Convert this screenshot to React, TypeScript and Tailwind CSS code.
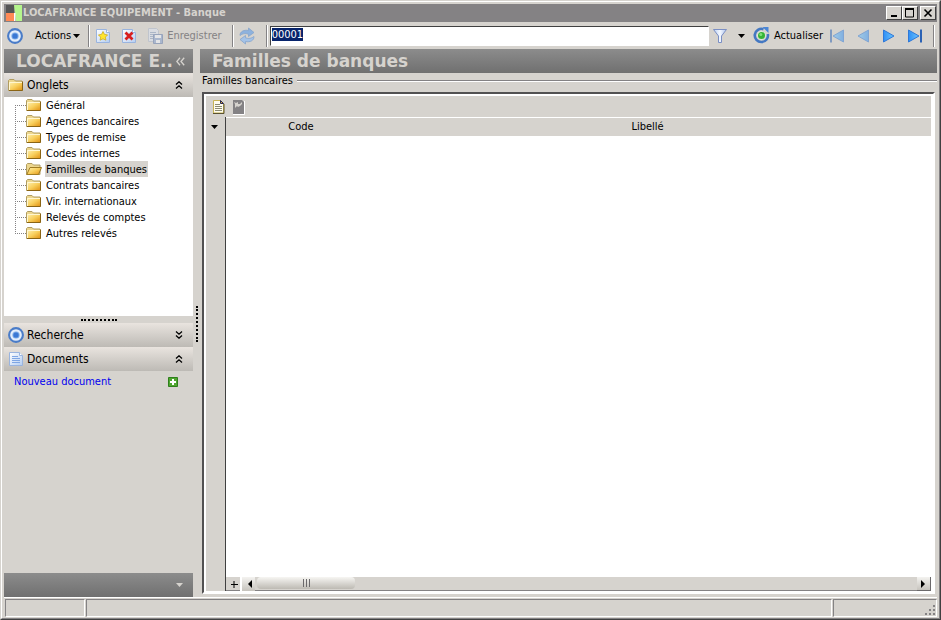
import { useEffect, useRef, type ReactNode } from "react";

const tabs = [
  "Général",
  "Agences bancaires",
  "Types de remise",
  "Codes internes",
  "Familles de banques",
  "Contrats bancaires",
  "Vir. internationaux",
  "Relevés de comptes",
  "Autres relevés",
];
const activeTab = "Familles de banques";

function Gradients() {
  return (
    <svg width="0" height="0" className="absolute" aria-hidden="true">
      <defs>
        <linearGradient id="folder" x1="0" y1="0" x2="1" y2="1">
          <stop offset="0" stopColor="#fff0b0" />
          <stop offset="0.5" stopColor="#f8cf5c" />
          <stop offset="1" stopColor="#e08f10" />
        </linearGradient>
        <linearGradient id="paper" x1="0" y1="0" x2="1" y2="1">
          <stop offset="0" stopColor="#ffffff" />
          <stop offset="1" stopColor="#b4cdf2" />
        </linearGradient>
        <linearGradient id="nav" x1="0" y1="0" x2="1" y2="0">
          <stop offset="0" stopColor="#2f8ef4" />
          <stop offset="1" stopColor="#6cc6ff" />
        </linearGradient>
        <linearGradient id="funnel" x1="0" y1="0" x2="1" y2="0">
          <stop offset="0" stopColor="#b9cff2" />
          <stop offset="0.5" stopColor="#f4f8ff" />
          <stop offset="1" stopColor="#a9c0ea" />
        </linearGradient>
      </defs>
    </svg>
  );
}

function Target() {
  return (
    <svg width="16" height="16" viewBox="0 0 16 16" className="shrink-0">
      <circle cx="8" cy="8" r="6.9" fill="#e4eefb" stroke="#4a7cc8" strokeWidth="2.1" />
      <circle cx="8" cy="8" r="3.600" fill="#79a9e6" />
      <circle cx="8" cy="8" r="2.600" fill="#3a78d4" />
    </svg>
  );
}

function Folder({ open = false }: { open?: boolean }) {
  return (
    <svg width="16" height="16" viewBox="0 0 16 16" className="shrink-0">
      <path d="M.5 13.5V3.500l1-1H6L7.500 4H14v9.500z" fill="#ecd68e" stroke="#b09c60" />
      {open ? (
        <path d="M.8 13.5 4 6.5h11.5l-3 7z" fill="url(#folder)" stroke="#a07c24" />
      ) : (
        <>
          <path d="M1 5h13.500v8.500H1z" fill="url(#folder)" />
          <path d="M1 13.500h13.500V4.500" fill="none" stroke="#8a6414" />
          <path d="M1.500 13V5.500H14" fill="none" stroke="#fff6cf" />
        </>
      )}
    </svg>
  );
}

function Page({ children }: { children?: ReactNode }) {
  return (
    <svg width="16" height="16" viewBox="0 0 16 16" className="shrink-0">
      <path d="M1.500 1.500h10l3 3v10h-13z" fill="url(#paper)" stroke="#9ab4de" />
      <path d="M11.500 1.500v3h3" fill="#fff" stroke="#9ab4de" />
      {children}
    </svg>
  );
}

function PageLines() {
  return (
    <Page>
      <path d="M4 5.500h6M4 7.500h8M4 9.500h8M4 11.500h8" stroke="#7fa6e4" />
    </Page>
  );
}

function Save() {
  return (
    <svg width="16" height="16" viewBox="0 0 16 16" className="shrink-0 opacity-60">
      <path d="M1.500.5h8l2 2v11h-10z" fill="#dbe3f0" stroke="#b0bbcd" />
      <path d="M3 4.500h6M3 6.500h6M3 8.500h4M3 10.500h3" stroke="#8fa3c4" />
      <path d="M6.500 6.500h9v9h-9z" fill="#8ea6cf" stroke="#7086b0" />
      <path d="M8 7h6v3H8zM9 12h4v3H9z" fill="#eef2f8" />
    </svg>
  );
}

function Sync() {
  return (
    <svg width="18" height="18" viewBox="0 0 18 18" className="shrink-0">
      <path d="M2 8.500C1.800 4.500 6 2.500 10.500 3.500V1L16 5.500l-5.500 4V7.200C7.500 6 4.500 6.500 2 8.500z" fill="#8db2de" stroke="#86a5cc" strokeWidth=".8" />
      <path d="M16 9.500c.2 4-4 6-8.500 5V17L2 12.500l5.500-4v2.300c3 1.200 6 .7 8.500-1.300z" fill="#a4c3e8" stroke="#86a5cc" strokeWidth=".8" />
    </svg>
  );
}

function Funnel() {
  return (
    <svg width="16" height="16" viewBox="0 0 16 16">
      <path d="M1.500 1.500h13L9.500 8v6.500h-3V8z" fill="url(#funnel)" stroke="#7b8fc4" />
    </svg>
  );
}

function Refresh() {
  return (
    <svg width="17" height="17" viewBox="0 0 17 17" className="shrink-0">
      <path d="M10.500 2.200A6.600 6.600 0 1 0 14.800 7" fill="none" stroke="#4478c2" strokeWidth="2.600" />
      <path d="M9.500 0h6v6z" fill="#4a86d6" />
      <circle cx="8.500" cy="8.500" r="4.200" fill="#dff0df" />
      <circle cx="8.500" cy="8.500" r="3.500" fill="#36b336" />
      <circle cx="7.800" cy="7.600" r="1.500" fill="#7fe07a" />
    </svg>
  );
}

function Nav({ flip = false, bar = false }: { flip?: boolean; bar?: boolean }) {
  return (
    <svg
      width="16"
      height="16"
      viewBox="0 0 16 16"
      className={flip ? "rotate-180 opacity-50" : ""}
    >
      <path d={bar ? "M1.500 2v12l10.500-6z" : "M2.500 2v12l10.500-6z"} fill="url(#nav)" stroke="#2f78d8" />
      {bar && <path d="M13 1.500h2v13h-2z" fill="#2c62b4" />}
    </svg>
  );
}

function Caret() {
  return (
    <svg width="7" height="4" viewBox="0 0 7 4" fill="currentColor" className="shrink-0">
      <path d="M0 0h7L3.500 4z" />
    </svg>
  );
}

function Chevrons({ down = false }: { down?: boolean }) {
  return (
    <svg width="8" height="8" viewBox="0 0 8 8" className={down ? "rotate-180" : ""}>
      <path d="M1 3.500 4 .8l3 2.700M1 7.500l3-2.700 3 2.700" fill="none" stroke="#000" strokeWidth="1.300" />
    </svg>
  );
}

function Separator() {
  return <span className="h-[22px] w-[2px] shrink-0 border-l border-r border-l-[#848284] border-r-white" />;
}

function WindowButton({ label, children }: { label: string; children: ReactNode }) {
  return (
    <button
      aria-label={label}
      className="flex h-[14px] w-4 items-center justify-center border border-t-white border-r-[#404040] border-b-[#404040] border-l-white bg-[#d6d3ce]"
    >
      <svg width="10" height="10" viewBox="0 0 10 10" fill="none" stroke="#000">
        {children}
      </svg>
    </button>
  );
}

function TitleBar() {
  return (
    <header className="flex h-[18px] shrink-0 items-center bg-[#848284] pr-px text-[11px] font-bold text-[#d6d3ce]">
      <svg width="18" height="18" viewBox="0 0 18 18" className="mr-px shrink-0">
        <path d="M2 1h8v8H2z" fill="#555" />
        <path d="M2 9h8v8H2z" fill="#ff8a55" />
        <path d="M10 1h8v16h-6z" fill="#b5f58c" />
        <path d="M10 9h1.500v8H10z" fill="#fff" />
      </svg>
      <h1 className="grow whitespace-pre">LOCAFRANCE EQUIPEMENT - Banque</h1>
      <div className="flex">
        <WindowButton label="Réduire">
          <path d="M2 8h6" strokeWidth="2" />
        </WindowButton>
        <WindowButton label="Agrandir">
          <path d="M.5 1h8v8h-8z" />
          <path d="M0 1h9" strokeWidth="2" />
        </WindowButton>
        <span className="w-[2px]" />
        <WindowButton label="Fermer">
          <path d="m1.500 1.500 7 7m0-7-7 7" strokeWidth="1.600" />
        </WindowButton>
      </div>
    </header>
  );
}

function Toolbar() {
  const record = useRef<HTMLInputElement>(null);
  useEffect(() => {
    record.current?.focus();
    record.current?.select();
  }, []);
  return (
    <div className="flex h-[27px] shrink-0 items-center pr-[2px] pl-[3px]">
      <Target />
      <button className="ml-3 flex items-center gap-[2px]">
        Actions <Caret />
      </button>
      <span className="w-2" />
      <Separator />
      <button aria-label="Nouveau" className="ml-[5px]">
        <Page>
          <path d="m8 3.500 1.500 2.900 3.100.5-2.200 2.200.5 3.100L8 10.800l-2.900 1.400.5-3.100-2.200-2.200 3.100-.5z" fill="#ffe52e" stroke="#c9a512" strokeWidth=".7" />
        </Page>
      </button>
      <button aria-label="Supprimer" className="ml-[10px]">
        <Page>
          <path d="m4.500 4.500 7 7m0-7-7 7" stroke="#d81e1e" strokeWidth="2.800" />
        </Page>
      </button>
      <button disabled className="ml-[10px] flex items-center gap-1 text-[#848284]">
        <Save /> Enregistrer
      </button>
      <span className="w-[10px]" />
      <Separator />
      <button aria-label="Synchroniser" className="ml-1">
        <Sync />
      </button>
      <span className="w-[10px]" />
      <Separator />
      <input
        ref={record}
        aria-label="Code banque"
        defaultValue="00001"
        className="ml-[2px] h-5 min-w-0 grow border border-t-[#404040] border-r-white border-b-white border-l-[#404040] bg-white px-px pb-[2px] outline-none selection:bg-[#08246b] selection:text-white"
      />
      <button aria-label="Filtrer" className="ml-[3px]">
        <Funnel />
      </button>
      <button aria-label="Options du filtre" className="mr-2 ml-[10px]">
        <Caret />
      </button>
      <button className="flex items-center gap-1">
        <Refresh /> Actualiser
      </button>
      <div className="mr-[10px] ml-[6px] flex gap-[10px]">
        <button aria-label="Premier"><Nav flip bar /></button>
        <button aria-label="Précédent"><Nav flip /></button>
        <button aria-label="Suivant"><Nav /></button>
        <button aria-label="Dernier"><Nav bar /></button>
      </div>
      <Separator />
    </div>
  );
}

function SectionHeader({ icon, title, collapsed = false }: { icon: ReactNode; title: string; collapsed?: boolean }) {
  return (
    <button className="flex h-6 w-full shrink-0 items-center gap-[3px] bg-linear-to-b from-[#e9e4df] to-[#bdbab5] pr-[10px] pl-1 text-[12px]">
      {icon}
      <span className="grow text-left">{title}</span>
      <Chevrons down={collapsed} />
    </button>
  );
}

function Tree() {
  return (
    <nav className="h-[219px] shrink-0 bg-white">
      <ul>
        {tabs.map((tab, i) => (
          <li key={tab}>
            <a href="#" className="flex h-4 items-center pl-[11px]">
              <svg width="11" height="16" viewBox="0 0 11 16" fill="none" stroke="#848284" strokeDasharray="1 1">
                <path d={i === 0 ? "M.5 8v8" : i === tabs.length - 1 ? "M.5 0v8" : "M.5 0v16"} />
                <path d="M0 8.500h11" />
              </svg>
              <Folder open={tab === activeTab} />
              <span className={tab === activeTab ? "ml-[3px] bg-[#d6d3ce] px-px pt-[2px]" : "ml-[3px] px-px pt-[2px]"}>
                {tab}
              </span>
            </a>
          </li>
        ))}
      </ul>
    </nav>
  );
}

function Sidebar() {
  return (
    <aside className="flex w-[189px] shrink-0 flex-col">
      <div className="flex h-6 shrink-0 items-center bg-linear-to-b from-[#8c8c8c] to-[#707070] pr-2 pl-3 font-[Verdana,'DejaVu_Sans',sans-serif] text-[17px] font-bold text-[#d6d3ce]">
        <h2 className="grow whitespace-nowrap">LOCAFRANCE E..</h2>
        <button aria-label="Replier le volet">
          <svg width="9" height="9" viewBox="0 0 9 9" fill="none" stroke="currentColor" strokeWidth="1.300">
            <path d="M4 .8.800 4.500 4 8.200M8.200.8 5 4.500l3.200 3.700" />
          </svg>
        </button>
      </div>
      <SectionHeader icon={<Folder />} title="Onglets" />
      <Tree />
      <div className="flex h-[7px] shrink-0 items-center justify-center">
        <span className="w-9 border-t-2 border-dotted border-black" />
      </div>
      <SectionHeader icon={<Target />} title="Recherche" collapsed />
      <SectionHeader icon={<PageLines />} title="Documents" />
      <div className="flex h-[22px] shrink-0 items-center justify-between pr-[15px] pl-[10px]">
        <a href="#" className="text-[#0000ef]">Nouveau document</a>
        <button aria-label="Ajouter un document">
          <svg width="10" height="10" viewBox="0 0 10 10">
            <path d="M.5.5h9v9h-9z" fill="#4fa62f" stroke="#2f7f1c" />
            <path d="M5 2v6M2 5h6" stroke="#fff" strokeWidth="2" />
          </svg>
        </button>
      </div>
      <div className="grow" />
      <div className="flex h-6 shrink-0 items-center justify-end bg-linear-to-b from-[#8c8c8c] to-[#707070] pr-[10px] text-[#d6d3ce]">
        <button aria-label="Plus de volets"><Caret /></button>
      </div>
    </aside>
  );
}

function ScrollBar() {
  return (
    <div className="flex h-[14px] shrink-0 bg-[#d6d3ce] shadow-[inset_0_-1px_#848284]">
      <button aria-label="Ajouter une ligne" className="w-4 border-r-2 border-white">
        <svg width="14" height="14" viewBox="0 0 14 14"><path d="M8 4v7M5 7.500h7" stroke="#000" /></svg>
      </button>
      <button aria-label="Défiler à gauche" className="w-[13px] bg-linear-to-b from-[#f4f3f0] to-[#c6c3bd]">
        <svg width="13" height="14" viewBox="0 0 13 14"><path d="M10 3v8L6 7z" /></svg>
      </button>
      <div className="ml-[2px] flex h-3 w-[98px] items-center justify-center gap-[2px] rounded-sm bg-linear-to-b from-[#f7f6f3] to-[#bdbab3]">
        <span className="h-2 w-px bg-[#6b696b]" />
        <span className="h-2 w-px bg-[#6b696b]" />
        <span className="h-2 w-px bg-[#6b696b]" />
      </div>
      <div className="grow" />
      <button aria-label="Défiler à droite" className="w-[14px] border-r border-b border-[#6b696b] bg-linear-to-b from-[#f4f3f0] to-[#c6c3bd]">
        <svg width="13" height="13" viewBox="0 0 13 13"><path d="M4 3v8l4-4z" /></svg>
      </button>
    </div>
  );
}

function Grid() {
  return (
    <div className="mx-[2px] mt-1 mb-[3px] flex grow flex-col border-2 border-t-[#525152] border-r-white border-b-white border-l-[#525152] bg-[#d6d3ce]">
      <div className="flex grow flex-col border-t-2 border-r-2 border-b border-l-2 border-white">
        <div className="flex h-[21px] shrink-0 items-center gap-[5px] pl-[6px]">
          <button aria-label="Nouvelle ligne">
            <svg width="14" height="16" viewBox="0 0 14 16">
              <path d="M1.500 1.500h7l3 3v9.500h-10z" fill="#fffdf0" stroke="#c9b455" />
              <path d="M12 5v9.500H1" fill="none" stroke="#5a5230" />
              <path d="M8.500 1.500v3h3z" fill="#e8b030" stroke="#2a2a50" />
              <path d="M3 5.500h5M3 7.500h7M3 9.500h7M3 11.500h7" stroke="#8a8a72" />
            </svg>
          </button>
          <button aria-label="Supprimer la ligne" disabled>
            <svg width="16" height="16" viewBox="0 0 16 16">
              <path d="M2 1h9l3 3v11H2z" fill="#848284" />
              <path d="M13.500 2v13.500H2" fill="none" stroke="#fff" />
              <path d="m3 3 2 1 2-1v2h2l2-2v2L9 7l-2 1-1-1-2 2V5z" fill="#d6d3ce" />
            </svg>
          </button>
        </div>
        <div className="flex grow">
          <div className="w-5 shrink-0 border-r border-[#404040] pt-2 pl-[5px]">
            <button aria-label="Menu de la grille" className="block"><Caret /></button>
          </div>
          <div className="flex min-w-0 grow flex-col bg-white">
            <table className="w-full table-fixed">
              <thead>
                <tr className="h-[18px] bg-[#d6d3ce]">
                  <th className="w-6 p-0" />
                  <th className="w-[126px] border-t border-white py-0 pr-6 pl-0 font-normal">Code</th>
                  <th className="border-t border-white py-0 pr-3 pl-0 font-normal">Libellé</th>
                </tr>
              </thead>
              <tbody />
            </table>
            <div className="grow" />
            <ScrollBar />
          </div>
        </div>
      </div>
    </div>
  );
}

export default function App() {
  return (
    <div className="flex h-screen flex-col border border-t-[#d6d3ce] border-r-[#404040] border-b-[#404040] border-l-[#d6d3ce] bg-[#d6d3ce] font-[Tahoma,'DejaVu_Sans_Condensed','DejaVu_Sans',sans-serif] text-[11px] leading-[14px] text-black">
      <Gradients />
      <div className="flex min-h-0 grow flex-col border border-t-white border-r-[#848284] border-b-[#848284] border-l-white px-[2px] pt-[2px] pb-px">
        <TitleBar />
        <Toolbar />
        <main className="flex min-h-0 grow">
          <Sidebar />
          <div className="flex w-[7px] shrink-0 justify-center pt-[257px]">
            <span className="h-9 border-l-2 border-dotted border-black" />
          </div>
          <section className="flex min-w-0 grow flex-col">
            <h2 className="h-6 shrink-0 bg-linear-to-b from-[#8c8c8c] to-[#707070] pl-3 font-[Verdana,'DejaVu_Sans',sans-serif] text-[17px] leading-6 font-bold text-[#d6d3ce]">
              Familles de banques
            </h2>
            <div className="flex h-[15px] shrink-0 items-center gap-1 pl-[2px]">
              <h3>Familles bancaires</h3>
              <span className="h-[2px] grow border-t border-b border-t-[#848284] border-b-white" />
            </div>
            <Grid />
          </section>
        </main>
        <footer className="flex h-5 shrink-0 gap-px border-t border-white pt-px pl-px">
          <div className="w-20 border border-t-[#848284] border-r-white border-b-white border-l-[#848284]" />
          <div className="grow border border-t-[#848284] border-r-white border-b-white border-l-[#848284]" />
          <div className="flex w-[104px] items-end justify-end border border-t-[#848284] border-r-white border-b-white border-l-[#848284]">
            <svg width="12" height="12" viewBox="0 0 12 12" fill="#848284">
              <path d="M9 1h2v2H9zM5 5h2v2H5zM9 5h2v2H9zM1 9h2v2H1zM5 9h2v2H5zM9 9h2v2H9z" />
            </svg>
          </div>
        </footer>
      </div>
    </div>
  );
}
